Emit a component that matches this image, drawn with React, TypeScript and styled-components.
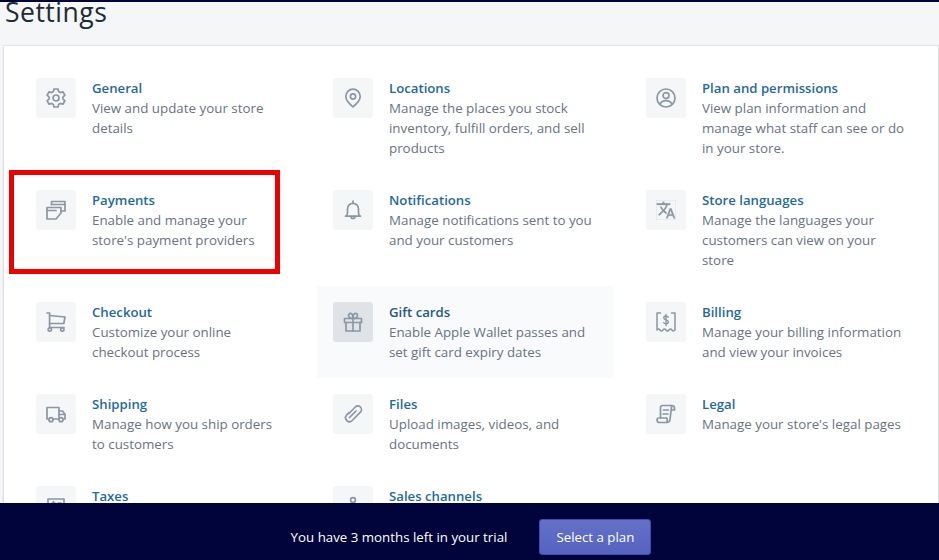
import React from 'react';
import styled, { createGlobalStyle } from 'styled-components';
import { MdTranslate } from 'react-icons/md';

const GlobalStyle = createGlobalStyle`
  html, body {
    margin: 0;
    padding: 0;
    background: #f4f6f8;
  }
  body {
    font-family: "Open Sans", "Noto Sans", "Liberation Sans", sans-serif;
  }
`;

const Page = styled.div`
  position: relative;
  width: 939px;
  height: 560px;
  overflow: hidden;
  border-top: 2px solid #00043a;
  box-sizing: border-box;
  background: #f4f6f8;
`;

const Title = styled.h1`
  margin: 0;
  height: 44px;
  padding-left: 5px;
  font-size: 26.5px;
  font-weight: 400;
  letter-spacing: 0.5px;
  line-height: 20px;
  color: #212b36;
`;

const Card = styled.div`
  margin: 0 1px 0 4px;
  padding: 16px 0 0 16px;
  background: #fff;
  box-shadow: 0 0 0 1px rgba(63, 63, 68, 0.07), 0 1px 3px 0 rgba(63, 63, 68, 0.15);
`;

const Grid = styled.div`
  display: grid;
  grid-template-columns: 297px 313px 1fr;
`;

const Item = styled.a<{ $hover?: boolean }>`
  position: relative;
  display: flex;
  gap: 16px;
  box-sizing: border-box;
  max-width: 296px;
  padding: 16px;
  background: ${p => (p.$hover ? '#f9fafb' : 'transparent')};
`;

const Tile = styled.div<{ $hover?: boolean }>`
  flex: none;
  display: flex;
  align-items: center;
  justify-content: center;
  width: 40px;
  height: 40px;
  border-radius: 3px;
  background: ${p => (p.$hover ? '#dfe3e8' : '#f4f6f8')};
  color: #8b97a3;
`;

const Name = styled.div<{ $hover?: boolean }>`
  font-size: 13.2px;
  font-weight: 560;
  line-height: 20px;
  white-space: nowrap;
  color: ${p => (p.$hover ? '#28587f' : '#1f6a9f')};
`;

const Description = styled.div`
  font-size: 13.35px;
  line-height: 20px;
  white-space: pre-line;
  color: #68747f;
`;

const Highlight = styled.div`
  position: absolute;
  left: -11px;
  top: -4.5px;
  width: 271px;
  height: 104.5px;
  box-sizing: border-box;
  border: 5px solid #ec0000;
  pointer-events: none;
`;

const TrialBar = styled.div`
  position: absolute;
  left: 0;
  right: 0;
  bottom: 0;
  display: flex;
  justify-content: center;
  gap: 32px;
  height: 57px;
  box-sizing: border-box;
  padding: 16px 0 0 3px;
  background: #00043a;
`;

const TrialText = styled.span`
  font-size: 13.3px;
  line-height: 36px;
  color: #fff;
`;

const SelectPlan = styled.button`
  width: 112px;
  height: 36px;
  padding: 0;
  border: 1px solid #3f4eae;
  border-radius: 3px;
  font-family: inherit;
  font-size: 13.3px;
  color: #fff;
  background: linear-gradient(180deg, #6371c7, #5563c1);
`;

const Translate = styled(MdTranslate)`
  stroke: currentColor;
  stroke-width: 0.25;
`;

const Glyph: React.FC<{ children: React.ReactNode }> = ({ children }) => (
  <svg width="20" height="20" viewBox="0 0 20 20" fill="none" stroke="currentColor" strokeWidth="1.7" strokeLinecap="round" strokeLinejoin="round">
    {children}
  </svg>
);

const icons: Record<string, React.ReactNode> = {
  general: (
    <Glyph>
      <circle cx="10" cy="10" r="3" />
      <path d="M8 1h4l.6 2.600 1.700 1 2.600-.8 2 3.400-2 1.900v1.800l2 1.900-2 3.400-2.600-.8-1.700 1-.6 2.600H8l-.6-2.600-1.700-1-2.600.8-2-3.400 2-1.900V9.100l-2-1.900 2-3.400 2.600.8 1.700-1z" />
    </Glyph>
  ),
  payments: (
    <Glyph>
      <path d="M5.500 4.500V1.500H19v9.500h-4" />
      <path d="M5.500 4.500H19" />
      <path d="M1 7.500h14V13l-5 6H1z" />
      <path d="M1 10.500h9" />
    </Glyph>
  ),
  checkout: (
    <Glyph>
      <path d="M1 1h2.600v14.500H18" />
      <path d="M3.600 3.500l15.400 1.500-1.200 6.500H3.600" />
      <circle cx="3.800" cy="17.500" r="1.700" />
      <circle cx="16.300" cy="17.500" r="1.700" />
    </Glyph>
  ),
  shipping: (
    <Glyph>
      <path d="M3 15H1V3.500h12V15H7" />
      <path d="M13 7h3.500L19 10.500V15h-1.500" />
      <path d="M13 10.500h6" />
      <circle cx="5" cy="15.700" r="2" />
      <circle cx="15" cy="15.700" r="2" />
    </Glyph>
  ),
  taxes: (
    <Glyph>
      <path d="M2 18V3h16v15z" />
      <path d="M6 7h3M12 7h3M7.500 5.500v3" />
    </Glyph>
  ),
  locations: (
    <Glyph>
      <path d="M10 1.200a7.200 7.200 0 0 0-7.200 7.200c0 4.400 7.200 10.400 7.200 10.400s7.200-6 7.200-10.400A7.200 7.200 0 0 0 10 1.200z" />
      <circle cx="10" cy="8.500" r="2.600" />
    </Glyph>
  ),
  notifications: (
    <Glyph>
      <path d="M10 1v2" />
      <path d="M2.500 16.200c1.400-.6 2-1.600 2-3.200V8.800a5.500 5.500 0 0 1 11 0V13c0 1.600.6 2.600 2 3.200z" />
      <path d="M8 16.500a2 2 0 0 0 4 0" />
    </Glyph>
  ),
  gift: (
    <Glyph>
      <path d="M1.500 6.500h17v4h-17z" />
      <path d="M3 10.500V19h14v-8.500" />
      <path d="M10 6.500V19" />
      <path d="M10 6.500C8 6.500 5.500 5.500 5.500 3.500 5.500 2 7 1 8.200 1.600 9.600 2.300 10 4.500 10 6.500c0-2 .4-4.200 1.800-4.900C13 1 14.500 2 14.500 3.500c0 2-2.500 3-4.500 3z" />
    </Glyph>
  ),
  files: (
    <Glyph>
      <path d="M13 7l-6.500 6.500" />
      <path d="M6 9.500l6.300-6.500a3.600 3.600 0 0 1 5.100 5.100L9.200 16.500a3.900 3.900 0 0 1-5.700-5.300L6 8.700" />
    </Glyph>
  ),
  sales: (
    <Glyph>
      <circle cx="10" cy="4" r="2.400" />
      <path d="M10 6.500V18" />
    </Glyph>
  ),
  plan: (
    <Glyph>
      <circle cx="10" cy="10" r="9" />
      <circle cx="10" cy="7.600" r="3" />
      <path d="M4.200 15.800c1-2 3.200-3.200 5.800-3.200s4.800 1.200 5.800 3.200" />
    </Glyph>
  ),
  billing: (
    <Glyph>
      <path d="M4.500 1H1v17c1-1.400 2-1.400 3 0s2 1.400 3 0 2-1.400 3 0 2 1.400 3 0 2-1.400 3 0 2 1 3 0V1h-3.500" strokeWidth="1.500" />
      <path d="M12.200 5.200C11.700 4.300 10.900 4 10 4c-1.200 0-2.200.7-2.200 1.900 0 2.600 4.500 1.300 4.500 3.900 0 1.200-1.100 2-2.300 2-1 0-1.900-.4-2.400-1.300M10 2.500v11" strokeWidth="1.400" />
    </Glyph>
  ),
  legal: (
    <Glyph>
      <path d="M15.500 3V1.500H6.500C5.300 1.500 4.500 2.300 4.500 3.500v10" />
      <path d="M15.500 1.500c1.500 0 3 .8 3 2.500v2h-3" />
      <path d="M15.500 3.500L14 15.500c-.2 1.800-1.300 3-3 3H3.500C2 18.500 1 17.500 1 16s1-2 2-2h8c.2 0 .3 1.500 0 4.500" />
      <path d="M7.500 6h5M7 10h5" />
    </Glyph>
  ),
};

interface Setting {
  key: string;
  name: string;
  text?: string;
  hover?: boolean;
  marked?: boolean;
}

const settings: Setting[] = [
  { key: 'general', name: 'General', text: 'View and update your store\ndetails' },
  { key: 'locations', name: 'Locations', text: 'Manage the places you stock\ninventory, fulfill orders, and sell\nproducts' },
  { key: 'plan', name: 'Plan and permissions', text: 'View plan information and\nmanage what staff can see or do\nin your store.' },
  { key: 'payments', name: 'Payments', text: "Enable and manage your\nstore's payment providers", marked: true },
  { key: 'notifications', name: 'Notifications', text: 'Manage notifications sent to you\nand your customers' },
  { key: 'languages', name: 'Store languages', text: 'Manage the languages your\ncustomers can view on your\nstore' },
  { key: 'checkout', name: 'Checkout', text: 'Customize your online\ncheckout process' },
  { key: 'gift', name: 'Gift cards', text: 'Enable Apple Wallet passes and\nset gift card expiry dates', hover: true },
  { key: 'billing', name: 'Billing', text: 'Manage your billing information\nand view your invoices' },
  { key: 'shipping', name: 'Shipping', text: 'Manage how you ship orders\nto customers' },
  { key: 'files', name: 'Files', text: 'Upload images, videos, and\ndocuments' },
  { key: 'legal', name: 'Legal', text: "Manage your store's legal pages" },
  { key: 'taxes', name: 'Taxes' },
  { key: 'sales', name: 'Sales channels' },
];

export default function App() {
  return (
    <Page>
      <GlobalStyle />
      <Title>Settings</Title>
      <Card>
        <Grid>
          {settings.map(s => (
            <Item key={s.key} $hover={s.hover}>
              <Tile $hover={s.hover}>
                {s.key === 'languages' ? <Translate size={20} /> : icons[s.key]}
              </Tile>
              <div>
                <Name $hover={s.hover}>{s.name}</Name>
                {s.text && <Description>{s.text}</Description>}
              </div>
              {s.marked && <Highlight />}
            </Item>
          ))}
        </Grid>
      </Card>
      <TrialBar>
        <TrialText>You have 3 months left in your trial</TrialText>
        <SelectPlan>Select a plan</SelectPlan>
      </TrialBar>
    </Page>
  );
}
